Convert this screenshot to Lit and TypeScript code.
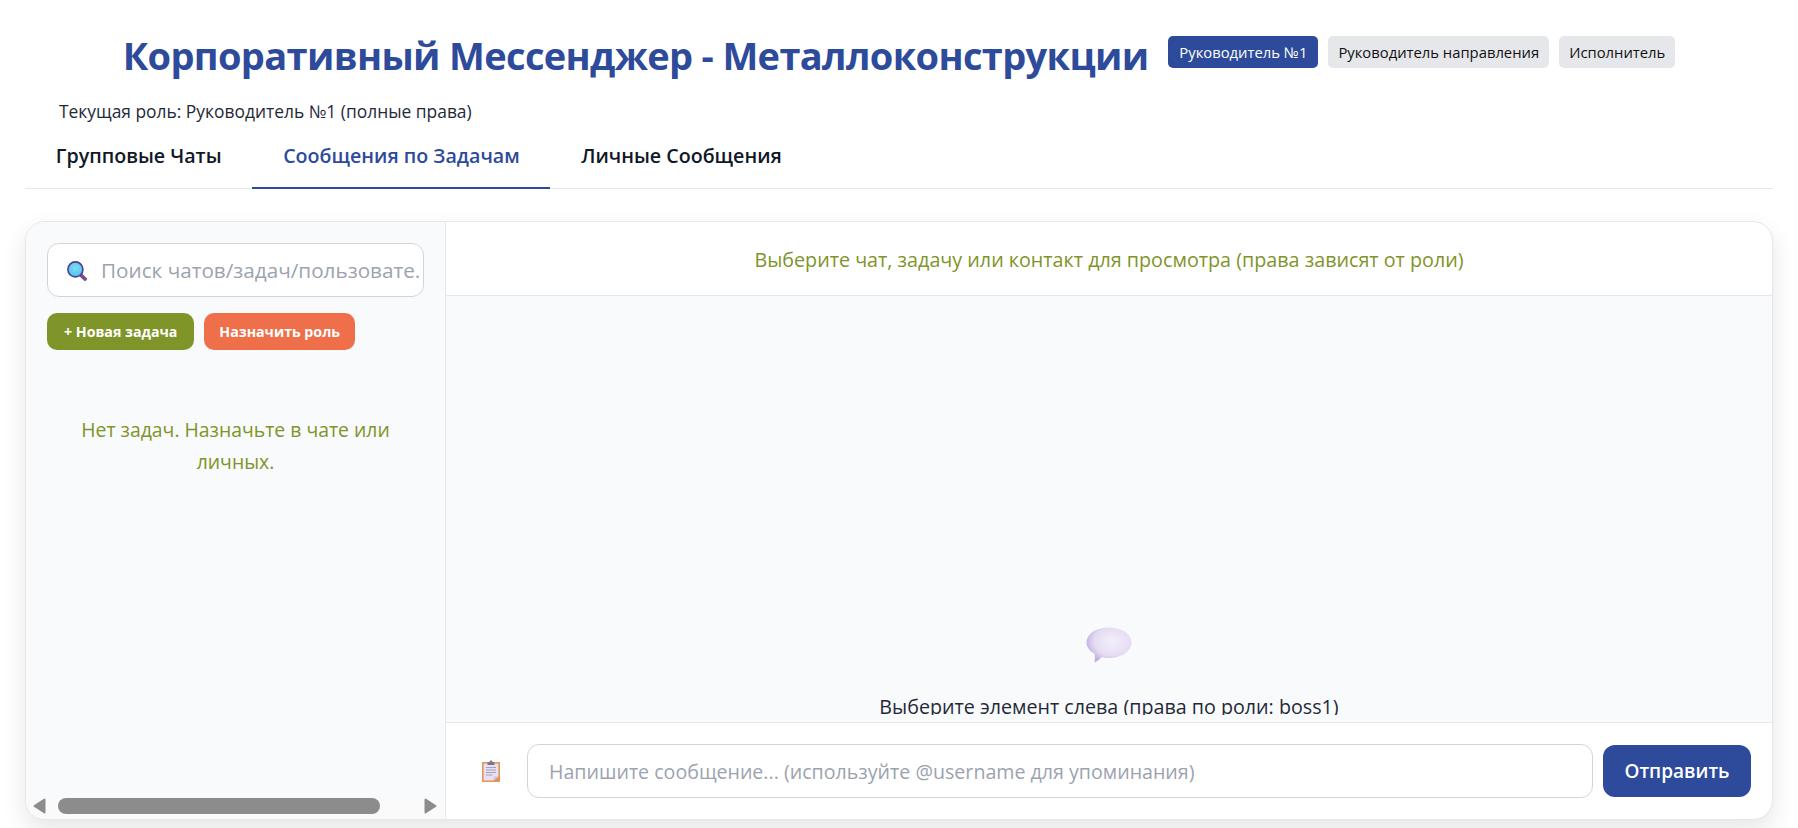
import { LitElement, html, css } from "lit";
import { customElement, state } from "lit/decorators.js";

const ROLES = ["Руководитель №1", "Руководитель направления", "Исполнитель"];
const TABS = ["Групповые Чаты", "Сообщения по Задачам", "Личные Сообщения"];

const searchIcon = html`<svg class="search-icon" width="20" height="20" viewBox="0 0 20 20">
  <defs>
    <radialGradient id="lens" cx="0.5" cy="0.4" r="0.6">
      <stop offset="0" stop-color="#7edcf5"></stop>
      <stop offset="1" stop-color="#4fc3ea"></stop>
    </radialGradient>
  </defs>
  <path d="M13.2 13.4 L18 18" stroke="#7c4a8e" stroke-width="3.8" stroke-linecap="round"></path>
  <circle cx="8.4" cy="8.4" r="7.5" fill="url(#lens)" stroke="#4d3f8f" stroke-width="1.6"></circle>
</svg>`;

const bubbleIcon = html`<svg width="46" height="36" viewBox="0 0 46 36">
  <defs>
    <radialGradient id="bubble" cx="0.58" cy="0.4" r="0.62">
      <stop offset="0" stop-color="#f3effa"></stop>
      <stop offset="0.65" stop-color="#e6dcf3"></stop>
      <stop offset="1" stop-color="#bfaee0"></stop>
    </radialGradient>
  </defs>
  <path
    d="M23 0.5 C35.5 0.5 45.5 7 45.5 15.5 C45.5 24 35.5 31 23 31 C20.5 31 18 30.8 16 30 C14 32 11 34.5 8.5 35.5 C9 32.5 9 29.5 8.6 27 C3.5 24 0.5 20 0.5 15.5 C0.5 7 10.5 0.5 23 0.5 Z"
    fill="url(#bubble)"></path>
</svg>`;

const clipIcon = html`<svg width="18" height="22" viewBox="0 0 18 22">
  <rect x="0" y="2" width="18" height="20" rx="0.8" fill="#e2945a"></rect>
  <path d="M1.6 3.5 H16.4 V16.5 L11.5 20.5 H1.6 Z" fill="#e6e0f2"></path>
  <path d="M11.5 20.5 L12 16.5 H16.4 Z" fill="#cfc6de"></path>
  <path d="M5.5 2.2 H7.5 L8 0.4 H10 L10.5 2.2 H12.5 V5 H5.5 Z" fill="#7c7488"></path>
  <path d="M4 7.5 H14 M4 10 H14 M4 12.5 H14 M4 15 H10.5" stroke="#a8a0ba" stroke-width="1"></path>
</svg>`;

@customElement("app-root")
export class AppRoot extends LitElement {
  static styles = css`
    :host {
      display: flex;
      flex-direction: column;
      box-sizing: border-box;
      height: 100vh;
      padding: 0 25px 8px;
      background: #fff;
      color: #1f2937;
      font-family: "Open Sans", "Noto Sans", sans-serif;
      overflow: hidden;
    }
    * {
      box-sizing: border-box;
    }
    .top {
      display: flex;
      justify-content: center;
      align-items: center;
      gap: 20px;
      height: 110px;
    }
    h1 {
      margin: 0;
      color: #2e4a9a;
      font-size: 38px;
      font-weight: 700;
      letter-spacing: -0.65px;
      line-height: 52px;
      white-space: nowrap;
    }
    .roles {
      display: flex;
      gap: 10px;
      align-self: flex-start;
      padding-top: 36px;
    }
    .role {
      height: 32px;
      padding: 0 10px;
      border: 0;
      border-radius: 5px;
      background: #e5e7eb;
      color: #111;
      font: inherit;
      font-size: 14.8px;
      white-space: nowrap;
    }
    .role.on {
      padding: 0 11px;
      background: #2e4a9a;
      color: #fff;
    }
    .current {
      padding-left: 34px;
      height: 23px;
      margin-top: -10px;
      font-size: 17.4px;
      line-height: 22px;
    }
    .tabs {
      display: flex;
      height: 66px;
      border-bottom: 1px solid #e5e7eb;
    }
    .tab {
      padding: 0 30.8px;
      border-bottom: 2px solid transparent;
      margin-bottom: -1px;
      color: #111827;
      font-size: 19.65px;
      font-weight: 600;
      line-height: 66px;
      white-space: nowrap;
    }
    .tab.on {
      color: #2e4a9a;
      border-bottom-color: #2e4a9a;
    }
    .card {
      flex: 1;
      display: flex;
      min-height: 0;
      margin-top: 32px;
      border: 1px solid #e5e7eb;
      border-radius: 20px;
      background: #fff;
      box-shadow: 0 10px 25px rgba(0, 0, 0, 0.1);
      overflow: hidden;
    }
    .side {
      width: 420px;
      flex: none;
      display: flex;
      flex-direction: column;
      background: #f9fafb;
      border-right: 1px solid #e5e7eb;
    }
    .side-body {
      flex: 1;
      padding: 21px 21px 0;
    }
    .search {
      position: relative;
    }
    .search-icon {
      position: absolute;
      left: 20px;
      top: 18px;
    }
    .search input {
      width: 100%;
      height: 54px;
      padding: 0 0 0 53px;
      border: 1px solid #d1d5db;
      border-radius: 12px;
      background: #fff;
      font: inherit;
      font-size: 20.7px;
      outline: none;
    }
    input::placeholder {
      color: #9ca3af;
      opacity: 1;
    }
    .actions {
      display: flex;
      gap: 10px;
      margin-top: 16px;
    }
    .action {
      height: 37px;
      border: 0;
      border-radius: 10px;
      color: #fff;
      font: inherit;
      font-size: 14.2px;
      font-weight: 700;
      white-space: nowrap;
    }
    .action.olive {
      padding: 0 17px;
      background: #7f9429;
    }
    .action.orange {
      padding: 0 15px;
      background: #ee6f49;
    }
    .empty {
      margin-top: 64px;
      padding: 0 20px;
      color: #7f9429;
      font-size: 19.4px;
      line-height: 32px;
      text-align: center;
    }
    .scrollbar {
      display: flex;
      align-items: center;
      height: 21px;
      padding: 0 8px 5px 7px;
      background: #fafafa;
    }
    .scrollbar svg {
      flex: none;
    }
    .thumb {
      width: 324px;
      height: 16px;
      margin: 0 44px 0 12px;
      border-radius: 8px;
      background: #8c8c8c;
    }
    .main {
      flex: 1;
      min-width: 0;
      display: flex;
      flex-direction: column;
    }
    .chat-head {
      height: 74px;
      flex: none;
      border-bottom: 1px solid #e5e7eb;
      color: #7f9429;
      font-size: 19.73px;
      line-height: 76px;
      text-align: center;
    }
    .messages {
      flex: 1;
      min-height: 0;
      display: flex;
      padding-bottom: 7px;
      background: #f9fafb;
      font-size: 19.7px;
      color: #1f2937;
    }
    .messages-inner {
      flex: 1;
      display: flex;
      flex-direction: column;
      align-items: center;
      justify-content: flex-end;
      overflow: hidden;
    }
    .messages svg {
      display: block;
      margin-bottom: 29px;
    }
    .messages p {
      margin: 0 0 -7px;
      line-height: 30px;
    }
    .composer {
      flex: none;
      display: flex;
      align-items: center;
      gap: 10px;
      height: 97px;
      padding: 0 21px 0 36px;
      border-top: 1px solid #e5e7eb;
    }
    .clip {
      display: flex;
      width: 35px;
    }
    .composer input {
      flex: 1;
      min-width: 0;
      height: 54px;
      padding: 0 21px;
      border: 1px solid #d1d5db;
      border-radius: 12px;
      font: inherit;
      font-size: 19.63px;
      outline: none;
    }
    .send {
      width: 148px;
      height: 52px;
      border: 0;
      border-radius: 12px;
      background: #2e4a9a;
      color: #fff;
      font: inherit;
      font-size: 19px;
      font-weight: 600;
    }
  `;

  @state() role = 0;
  @state() tab = 1;

  render() {
    return html`
      <div class="top">
        <h1>Корпоративный Мессенджер - Металлоконструкции</h1>
        <div class="roles">
          ${ROLES.map(
            (r, i) => html`<button class="role ${i === this.role ? "on" : ""}" @click=${() => (this.role = i)}>${r}</button>`
          )}
        </div>
      </div>
      <div class="current">Текущая роль: Руководитель №1 (полные права)</div>
      <div class="tabs">
        ${TABS.map(
          (t, i) => html`<div class="tab ${i === this.tab ? "on" : ""}" @click=${() => (this.tab = i)}>${t}</div>`
        )}
      </div>
      <div class="card">
        <aside class="side">
          <div class="side-body">
            <div class="search">
              ${searchIcon}
              <input placeholder="Поиск чатов/задач/пользовате." />
            </div>
            <div class="actions">
              <button class="action olive">+ Новая задача</button>
              <button class="action orange">Назначить роль</button>
            </div>
            <div class="empty">Нет задач. Назначьте в чате или личных.</div>
          </div>
          <div class="scrollbar">
            <svg width="13" height="16" viewBox="0 0 13 16"><path d="M1.5 8 L11.5 1.5 V14.5 Z" fill="#8c8c8c" stroke="#8c8c8c" stroke-width="2" stroke-linejoin="round"></path></svg>
            <div class="thumb"></div>
            <svg width="13" height="16" viewBox="0 0 13 16"><path d="M11.5 8 L1.5 1.5 V14.5 Z" fill="#8c8c8c" stroke="#8c8c8c" stroke-width="2" stroke-linejoin="round"></path></svg>
          </div>
        </aside>
        <section class="main">
          <div class="chat-head">Выберите чат, задачу или контакт для просмотра (права зависят от роли)</div>
          <div class="messages">
            <div class="messages-inner">
              ${bubbleIcon}
              <p>Выберите элемент слева (права по роли: boss1)</p>
            </div>
          </div>
          <div class="composer">
            <span class="clip">${clipIcon}</span>
            <input placeholder="Напишите сообщение... (используйте @username для упоминания)" />
            <button class="send">Отправить</button>
          </div>
        </section>
      </div>
    `;
  }
}
